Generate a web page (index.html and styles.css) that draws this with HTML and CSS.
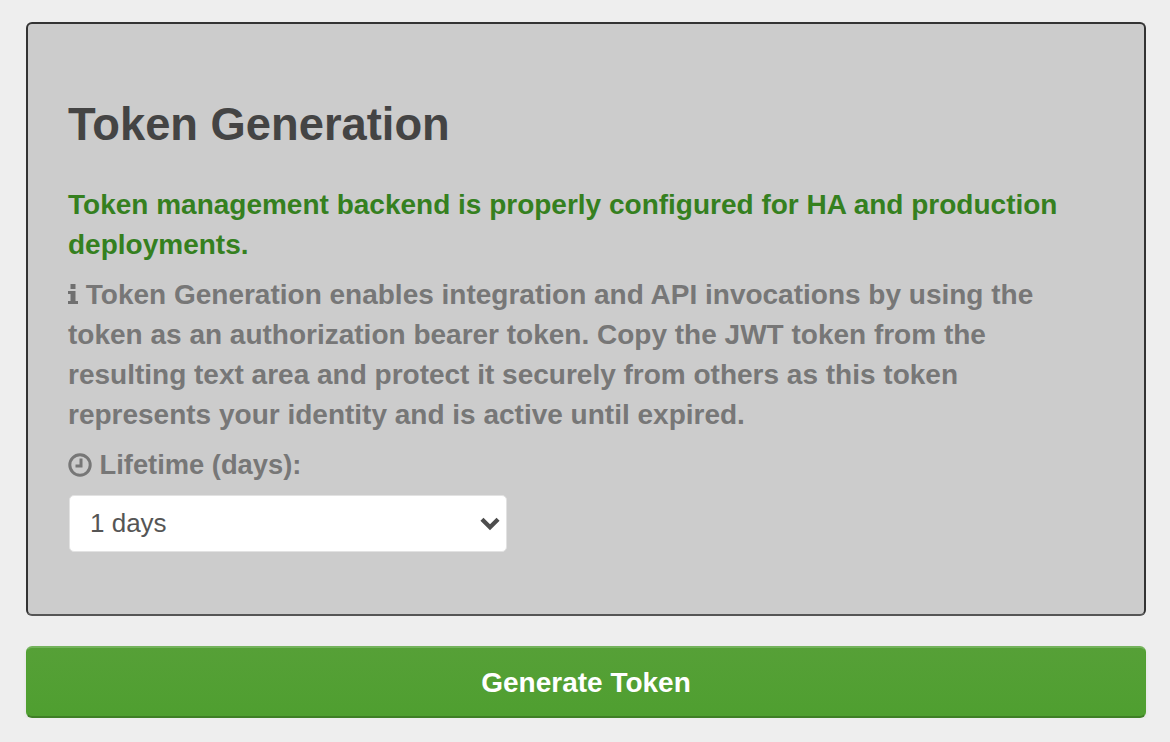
FILE: index.html
```html
<!DOCTYPE html>
<html lang="en">
<head>
    <meta charset="UTF-8">
    <title>Token Generation</title>
    <link rel="stylesheet" href="styles.css">
</head>
<body>
    <div class="page">
        <!-- Token panel -->
        <section class="token-panel">
            <h1 class="panel-title">Token Generation</h1>
            <p class="backend-status">Token management backend is properly configured for HA and production deployments.</p>
            <p class="panel-help">
                <svg class="icon-info" viewBox="0 0 10 20" aria-hidden="true"><path d="M2.500 0h5v5h-5zM0 7h7.500v10H10v3H0v-3h2.500v-7H0z"/></svg>
                Token Generation enables integration and API invocations by using the token as an authorization bearer token. Copy the JWT token from the resulting text area and protect it securely from others as this token represents your identity and is active until expired.
            </p>
            <label class="lifetime-label" for="lifetime">
                <svg class="icon-clock" viewBox="0 0 24 24" aria-hidden="true"><circle cx="12" cy="12" r="10.200"/><path d="M13 5.500v7.500H7.500"/></svg>
                Lifetime (days):
            </label>
            <div class="select-wrap">
                <select class="lifetime-select" id="lifetime">
                    <option>1 days</option>
                    <option>7 days</option>
                    <option>30 days</option>
                </select>
                <svg class="select-arrow" viewBox="0 0 20 14" aria-hidden="true"><path d="M2.500 3l7.500 7.500L17.500 3"/></svg>
            </div>
        </section>

        <button class="generate-btn" type="button">Generate Token</button>
    </div>
</body>
</html>
```

FILE: styles.css
```css
* {
    margin: 0;
    padding: 0;
    box-sizing: border-box;
}

body {
    font-family: "Liberation Sans", Arial, sans-serif;
    background: #eeeeee;
    color: #444444;
}

.page {
    padding: 22px 24px 0 26px;
    display: flex;
    flex-direction: column;
    gap: 30px;
}

/* Token panel */
.token-panel {
    height: 594px;
    padding: 74px 40px 0 40px;
    background: #cccccc;
    border: 2px solid #333333;
    border-bottom-color: #555555;
    border-radius: 6px;
}

.panel-title {
    font-size: 45.3px;
    line-height: 54px;
    font-weight: bold;
    color: #444444;
    margin-bottom: 33px;
}

.backend-status {
    font-size: 28px;
    line-height: 40px;
    font-weight: bold;
    color: #35801f;
    margin-bottom: 10px;
    max-width: 1020px;
}

.panel-help {
    font-size: 28px;
    line-height: 40px;
    font-weight: bold;
    color: #777777;
    margin-bottom: 10px;
    max-width: 1000px;
}

.icon-info {
    width: 10px;
    height: 20px;
    fill: #707070;
}

.lifetime-label {
    display: block;
    font-size: 27.300px;
    line-height: 40px;
    font-weight: bold;
    color: #777777;
    margin-bottom: 10px;
}

.icon-clock {
    width: 24px;
    height: 24px;
    fill: none;
    stroke: #777777;
    stroke-width: 3;
    vertical-align: -3px;
}

/* Lifetime select */
.select-wrap {
    position: relative;
    width: 438px;
    margin-left: 1px;
}

.lifetime-select {
    display: block;
    width: 100%;
    height: 57px;
    padding: 0 21px 2px 20px;
    appearance: none;
    background: #ffffff;
    border: 1px solid #e2e2e2;
    border-radius: 5px;
    font-family: inherit;
    font-size: 26px;
    color: #555555;
}

.select-arrow {
    position: absolute;
    top: 21px;
    right: 6px;
    width: 22px;
    height: 15px;
    fill: none;
    stroke: #4d4d4d;
    stroke-width: 4;
    pointer-events: none;
}

/* Generate button */
.generate-btn {
    height: 72px;
    padding-top: 2px;
    background: linear-gradient(180deg, #56a037 0%, #4f9f30 100%);
    border: 1px solid #50a030;
    border-top: 2px solid #74b35c;
    border-bottom: 2px solid #3f7f26;
    border-radius: 6px;
    box-shadow: 0 2px 4px rgba(0, 0, 0, 0.05);
    font-family: inherit;
    font-size: 28px;
    font-weight: bold;
    color: #ffffff;
    cursor: pointer;
}
```
